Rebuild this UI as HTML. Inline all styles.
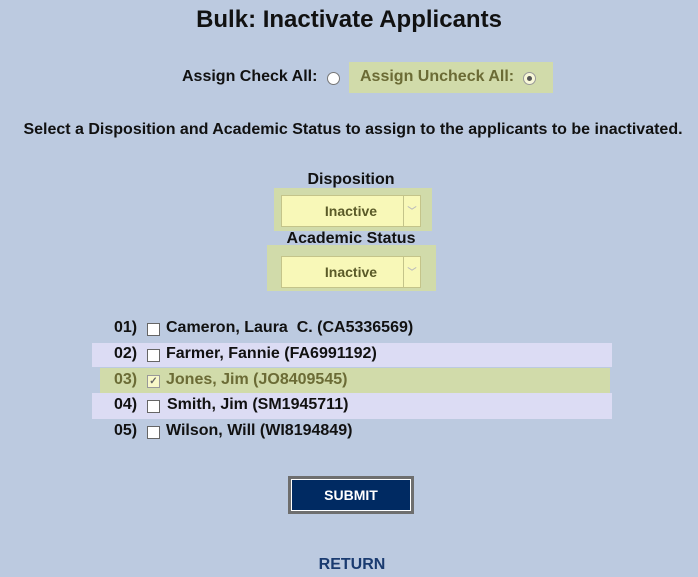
<!DOCTYPE html>
<html><head><style>
body{margin:0;width:698px;height:577px;background:#bccae0;font-family:"Liberation Sans",Arial,sans-serif;font-weight:bold;color:#111;position:relative;overflow:hidden}
.a{position:absolute;white-space:nowrap}
.rad{position:absolute;width:11px;height:11px;border-radius:50%;border:1px solid #777;background:#fff}
.sel{position:absolute;background:#f8f8b8;border:1px solid #c4c48a;color:#5a5a28;font-size:14px;text-align:center;line-height:30px}
.sel span{position:absolute;right:0;top:0;width:16px;height:100%;border-left:1px solid #c4c48a;color:#bbb;font-size:9px;line-height:30px}
.cb{position:absolute;width:11px;height:11px;border:1px solid #666;background:#fff}
.row{font-size:16px}
</style></head><body>
<div class="a" style="left:0;width:698px;top:6px;text-align:center;font-size:24px">Bulk: Inactivate Applicants</div>
<div class="a" style="left:182px;top:68px;font-size:16px">Assign Check All:</div>
<div class="rad" style="left:327px;top:72px"></div>
<div class="a" style="left:349px;top:62px;width:204px;height:31px;background:#d1dbaa"></div>
<div class="a" style="left:360px;top:68px;font-size:16px;color:#6b6b35">Assign Uncheck All:</div>
<div class="rad" style="left:523px;top:72px;background:#f8f8d8;border-color:#999"><div style="position:absolute;left:3px;top:3px;width:5px;height:5px;border-radius:50%;background:#555"></div></div>
<div class="a" style="left:0;width:706px;top:121px;text-align:center;font-size:16px">Select a Disposition and Academic Status to assign to the applicants to be inactivated.</div>
<div class="a" style="left:0;width:698px;top:171px;text-align:center;font-size:16px;padding-left:4px;box-sizing:border-box">Disposition</div>
<div class="a" style="left:274px;top:188px;width:158px;height:43px;background:#d1dbaa"></div>
<div class="sel" style="left:281px;top:195px;width:138px;height:30px">Inactive<span>﹀</span></div>
<div class="a" style="left:0;width:698px;top:230px;text-align:center;font-size:16px;padding-left:4px;box-sizing:border-box">Academic Status</div>
<div class="a" style="left:267px;top:245px;width:169px;height:46px;background:#d1dbaa"></div>
<div class="sel" style="left:281px;top:256px;width:138px;height:30px">Inactive<span>﹀</span></div>
<div class="a" style="left:92px;top:343px;width:520px;height:24px;background:#dcdcf4"></div>
<div class="a" style="left:100px;top:368px;width:510px;height:25px;background:#d1dbaa"></div>
<div class="a" style="left:92px;top:393px;width:520px;height:26px;background:#dcdcf4"></div>
<div class="a row" style="left:114px;top:319px">01)</div><div class="cb" style="left:147px;top:323px"></div><div class="a row" style="left:166px;top:319px">Cameron, Laura&nbsp; C. (CA5336569)</div>
<div class="a row" style="left:114px;top:345px">02)</div><div class="cb" style="left:147px;top:349px"></div><div class="a row" style="left:166px;top:345px">Farmer, Fannie (FA6991192)</div>
<div class="a row" style="left:114px;top:371px;color:#6b6b35">03)</div><div class="cb" style="left:147px;top:375px;background:#f8f8c8;border-color:#999;font-size:10px;line-height:11px;text-align:center;color:#666">✓</div><div class="a row" style="left:166px;top:371px;color:#6b6b35">Jones, Jim (JO8409545)</div>
<div class="a row" style="left:114px;top:396px">04)</div><div class="cb" style="left:147px;top:400px"></div><div class="a row" style="left:167px;top:396px">Smith, Jim (SM1945711)</div>
<div class="a row" style="left:114px;top:422px">05)</div><div class="cb" style="left:147px;top:426px"></div><div class="a row" style="left:166px;top:422px">Wilson, Will (WI8194849)</div>
<div class="a" style="left:288px;top:476px;width:120px;height:32px;background:#002a62;border:3px solid #6e6e6e;box-shadow:inset 0 0 0 1px #fff;color:#fff;font-size:14px;text-align:center;line-height:32px">SUBMIT</div>
<div class="a" style="left:0;width:704px;top:556px;text-align:center;font-size:16px;color:#1a3b70">RETURN</div>
</body></html>
